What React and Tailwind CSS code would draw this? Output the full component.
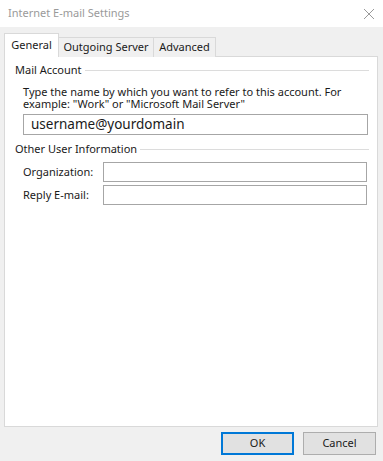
export default function App() {
    return (
        <div className="w-[383px] h-[461px] bg-[#f0f0f0] flex flex-col text-[11px] text-[#1a1a1a]" style={{ fontFamily: '"Noto Sans", "Open Sans", sans-serif' }}>
            {/* title bar */}
            <div className="h-[27px] bg-white flex items-center justify-between pl-[8px] pr-[6px] shrink-0">
                <span className="text-[#9a9a9a] text-[11px]">Internet E-mail Settings</span>
                <svg width="12" height="12" viewBox="0 0 12 12" className="mr-[2px]">
                    <path d="M1 1 L11 11 M11 1 L1 11" stroke="#9a9a9a" strokeWidth="1" />
                </svg>
            </div>

            {/* tabs */}
            <div className="flex items-end pl-[4px] mt-[6px] h-[24px] relative z-10">
                <div className="h-[24px] w-[55px] bg-white border border-[#d9d9d9] border-b-0 flex items-center justify-center">General</div>
                <div className="h-[20px] w-[95px] bg-[#f0f0f0] border border-[#d9d9d9] border-b-0 border-l-0 flex items-center justify-center">Outgoing Server</div>
                <div className="h-[20px] w-[62px] bg-[#f0f0f0] border border-[#d9d9d9] border-b-0 border-l-0 flex items-center justify-center">Advanced</div>
            </div>

            {/* panel */}
            <div className="mx-[4px] -mt-px w-[374px] h-[371px] bg-white border border-[#d9d9d9] px-[10px] pt-[6px]">
                <div className="flex items-center gap-[3px] h-[15px]">
                    <span>Mail Account</span>
                    <div className="flex-1 h-px bg-[#dcdcdc] mr-[-2px]" />
                </div>
                <div className="pl-[8px]">
                    <p className="mt-[8px] leading-[12px]">Type the name by which you want to refer to this account. For example: "Work" or "Microsoft Mail Server"</p>
                    <div className="mt-[4px] h-[21px] w-[345px] border border-[#a6a6a6] flex items-center pl-[7px] text-[13.5px]">username@yourdomain</div>
                </div>

                <div className="flex items-center gap-[3px] mt-[7px] h-[15px]">
                    <span>Other User Information</span>
                    <div className="flex-1 h-px bg-[#dcdcdc] mr-[-2px]" />
                </div>
                <div className="pl-[8px] flex flex-col gap-[3px] mt-[5px]">
                    <div className="flex items-center">
                        <span className="w-[80px]">Organization:</span>
                        <div className="h-[20px] w-[265px] border border-[#a6a6a6]" />
                    </div>
                    <div className="flex items-center">
                        <span className="w-[80px]">Reply E-mail:</span>
                        <div className="h-[20px] w-[265px] border border-[#a6a6a6]" />
                    </div>
                </div>
            </div>

            {/* buttons */}
            <div className="flex justify-end gap-[9px] pr-[7px] mt-[5px]">
                <button className="w-[73px] h-[23px] bg-[#e1e1e1] border-2 border-[#0078d7] flex items-center justify-center">OK</button>
                <button className="w-[73px] h-[23px] bg-[#e1e1e1] border border-[#adadad] flex items-center justify-center">Cancel</button>
            </div>
        </div>
    )
}
